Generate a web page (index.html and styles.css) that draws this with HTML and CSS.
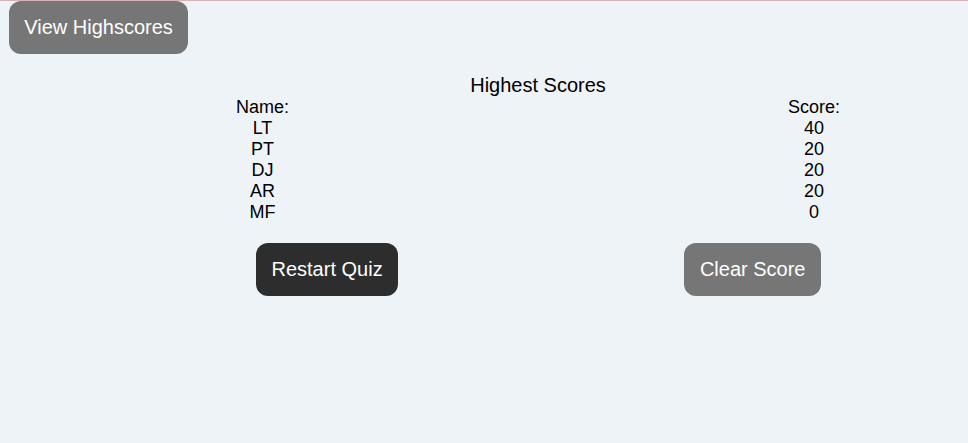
FILE: index.html
```html
<!DOCTYPE html>
<html lang="en">
<head>
<meta charset="utf-8">
<title>Highscores</title>
<link rel="stylesheet" href="styles.css">
</head>
<body>
<header class="topbar">
  <button class="btn btn-grey btn-top">View Highscores</button>
</header>
<main class="scores">
  <h1 class="title">Highest Scores</h1>
  <div class="table">
    <div class="col">
      <div>Name:</div>
      <div>LT</div>
      <div>PT</div>
      <div>DJ</div>
      <div>AR</div>
      <div>MF</div>
    </div>
    <div class="col">
      <div>Score:</div>
      <div>40</div>
      <div>20</div>
      <div>20</div>
      <div>20</div>
      <div>0</div>
    </div>
  </div>
  <div class="actions">
    <button class="btn btn-dark">Restart Quiz</button>
    <button class="btn btn-grey">Clear Score</button>
  </div>
</main>
</body>
</html>
```

FILE: styles.css
```css
html {
  background: #eef3f7;
}
body {
  margin: 0;
  border-top: 1px solid #d6b3b7;
  min-height: 442px;
  font-family: "Liberation Sans", Arial, sans-serif;
  font-size: 18px;
  color: #000;
  background: #eef3f7;
}
.topbar {
  padding-left: 9px;
}
.btn {
  font-family: "Liberation Sans", Arial, sans-serif;
  font-size: 20px;
  line-height: 23px;
  color: #fff;
  border: none;
  border-radius: 12px;
  padding: 15px 15.5px;
  cursor: pointer;
}
.btn-top {
  padding: 15px;
  width: 179px;
}
.btn-grey {
  background: #767676;
}
.btn-dark {
  background: #2d2d2d;
}
.scores {
  width: 604px;
  margin-left: 236px;
  margin-top: 20px;
}
.title {
  margin: 0;
  font-size: 20px;
  font-weight: normal;
  text-align: center;
  line-height: 23px;
}
.table {
  display: flex;
  justify-content: space-between;
  line-height: 21px;
}
.col {
  text-align: center;
}
.actions {
  display: flex;
  justify-content: space-between;
  padding: 0 19px 0 20px;
  margin-top: 20px;
}
```
